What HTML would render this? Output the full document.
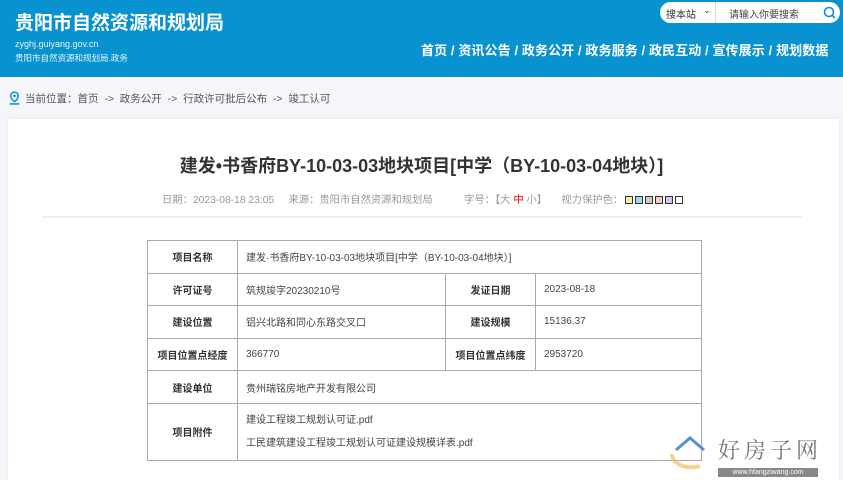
<!DOCTYPE html>
<html><head><meta charset="utf-8"><style>
*{margin:0;padding:0;box-sizing:border-box}
body{width:843px;height:480px;overflow:hidden;background:#f4f6f9;font-family:"Liberation Sans","Noto Sans CJK SC",sans-serif;color:#333;position:relative}
.hd{position:absolute;left:0;top:0;width:843px;height:77px;background:#0893d0;color:#fff}
.t1{position:absolute;left:15px;top:12px;font-size:19px;font-weight:bold;white-space:nowrap;line-height:24px}
.t2{position:absolute;left:15px;top:39px;font-size:9px;color:#e6f3fb}
.t3{position:absolute;left:15px;top:52px;font-size:8.5px;color:#e6f3fb}
.srch{position:absolute;left:660px;top:2px;width:180px;height:21px;background:#fff;border-radius:11px;font-size:10px;color:#333}
.nav{position:absolute;left:421px;top:40px;font-size:13px;font-weight:bold;white-space:nowrap;letter-spacing:0.1px}
.bc{position:absolute;left:8px;top:91px;font-size:10.5px;color:#555;white-space:nowrap}
.card{position:absolute;left:8px;top:119px;width:831px;height:361px;background:#fff;box-shadow:0 0 4px #e3e8ee}
h1{position:absolute;left:0;width:843px;top:152px;text-align:center;font-size:18px;font-weight:bold;color:#333}
.meta{position:absolute;left:162px;top:191px;font-size:10.3px;color:#999;white-space:nowrap}
.line{position:absolute;left:42px;top:216px;width:760px;height:2px;background:#eef0f3}
table{position:absolute;left:147px;top:240px;width:555px;border-collapse:collapse;font-size:10px}
td{border:1px solid #aaa;height:32.6px;padding:0 8px;color:#444;vertical-align:middle}
td.k{text-align:center;font-weight:bold;width:90px;color:#333}
.sq{display:inline-block;width:8px;height:8px;border:1px solid #333;margin-left:2px;vertical-align:-1px}
</style></head><body>
<div class="hd">
<div class="t1">贵阳市自然资源和规划局</div>
<div class="t2">zyghj.guiyang.gov.cn</div>
<div class="t3">贵阳市自然资源和规划局.政务</div>
<div class="srch"><span style="position:absolute;left:6px;top:4px">搜本站</span><span style="position:absolute;left:43px;top:3px;font-size:9px">⌄</span><span style="position:absolute;left:55px;top:0;width:1px;height:21px;background:#ddd"></span><span style="position:absolute;left:69px;top:4px;color:#444">请输入你要搜索</span>
<svg style="position:absolute;left:163px;top:4px" width="13" height="13" viewBox="0 0 13 13"><circle cx="6" cy="6" r="4.5" fill="none" stroke="#0893d0" stroke-width="1.6"/><path d="M9.3 9.3L12 12" stroke="#0893d0" stroke-width="1.6"/></svg></div>
<div class="nav">首页 / 资讯公告 / 政务公开 / 政务服务 / 政民互动 / 宣传展示 / 规划数据</div>
</div>
<div class="bc"><svg style="vertical-align:-3px;margin-right:4px" width="13" height="14" viewBox="0 0 11 13"><path d="M5.5 1a3.5 3.5 0 0 1 3.5 3.5c0 2.5-3.5 5.5-3.5 5.5S2 7 2 4.5A3.5 3.5 0 0 1 5.5 1z" fill="none" stroke="#0893d0" stroke-width="1.4"/><circle cx="5.5" cy="4.5" r="1.2" fill="#0893d0"/><path d="M1 12h9" stroke="#0893d0" stroke-width="1.4"/></svg>当前位置：首页 &nbsp;-&gt;&nbsp; 政务公开 &nbsp;-&gt;&nbsp; 行政许可批后公布 &nbsp;-&gt;&nbsp; 竣工认可</div>
<div class="card"></div>
<h1>建发•书香府BY-10-03-03地块项目[中学（BY-10-03-04地块）]</h1>
<div class="meta">日期：2023-08-18 23:05 &nbsp;&nbsp;&nbsp; 来源：贵阳市自然资源和规划局 &nbsp;&nbsp;&nbsp;&nbsp;&nbsp;&nbsp;&nbsp;&nbsp;&nbsp; 字号：【大 <span style="color:#e00">中</span> 小】 &nbsp;&nbsp;&nbsp; 视力保护色：<span class="sq" style="background:#f5eea0"></span><span class="sq" style="background:#9fd6f0"></span><span class="sq" style="background:#ccc"></span><span class="sq" style="background:#f5c8d0"></span><span class="sq" style="background:#d8c0f0"></span><span class="sq" style="background:#fff"></span></div>
<div class="line"></div>
<table>
<tr><td class="k">项目名称</td><td colspan="3">建发·书香府BY-10-03-03地块项目[中学（BY-10-03-04地块）]</td></tr>
<tr><td class="k">许可证号</td><td style="width:208px">筑规竣字20230210号</td><td class="k">发证日期</td><td>2023-08-18</td></tr>
<tr><td class="k">建设位置</td><td>铝兴北路和同心东路交叉口</td><td class="k">建设规模</td><td>15136.37</td></tr>
<tr><td class="k">项目位置点经度</td><td>366770</td><td class="k">项目位置点纬度</td><td>2953720</td></tr>
<tr><td class="k">建设单位</td><td colspan="3">贵州瑞铭房地产开发有限公司</td></tr>
<tr><td class="k" style="height:57px">项目附件</td><td colspan="3" style="line-height:23px">建设工程竣工规划认可证.pdf<br>工民建筑建设工程竣工规划认可证建设规模详表.pdf</td></tr>
</table>
<div style="position:absolute;left:668px;top:432px;width:44px;height:38px"><svg width="44" height="38" viewBox="0 0 44 38"><path d="M4 22c0 10 14 16 28 12" fill="none" stroke="#f0c060" stroke-width="4" opacity=".7"/><path d="M8 18L22 6l14 12" fill="none" stroke="#5a8fd0" stroke-width="3"/></svg></div>
<div style="position:absolute;left:718px;top:434px;font-size:22px;color:#777;font-family:'Noto Serif CJK SC',serif;letter-spacing:4px">好房子网</div>
<div style="position:absolute;left:718px;top:468px;width:100px;height:9px;background:#888;color:#fff;font-size:7px;line-height:9px;text-align:center">www.hfangziwang.com</div>
</body></html>
